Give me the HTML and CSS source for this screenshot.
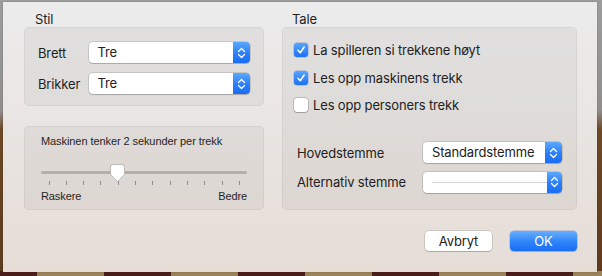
FILE: index.html
```html
<!DOCTYPE html>
<html lang="no">
<head>
  <meta charset="UTF-8">
  <title>Innstillinger</title>
  <link rel="stylesheet" href="styles.css">
</head>
<body>
  <div class="sheet">
    <div class="columns">
      <section class="col col-left">
        <h2 class="group-title">Stil</h2>
        <div class="box box-style">
          <div class="field">
            <span class="field-label">Brett</span>
            <div class="popup">
              <span class="popup-value">Tre</span>
              <span class="popup-arrows"><svg width="9" height="12" viewBox="0 0 9 12"><path d="M1.5 4.5 L4.5 1.5 L7.5 4.5 M1.5 7.5 L4.5 10.5 L7.5 7.5" fill="none" stroke="#fff" stroke-width="1.3" stroke-linecap="round" stroke-linejoin="round"/></svg></span>
            </div>
          </div>
          <div class="field">
            <span class="field-label">Brikker</span>
            <div class="popup">
              <span class="popup-value">Tre</span>
              <span class="popup-arrows"><svg width="9" height="12" viewBox="0 0 9 12"><path d="M1.5 4.5 L4.5 1.5 L7.5 4.5 M1.5 7.5 L4.5 10.5 L7.5 7.5" fill="none" stroke="#fff" stroke-width="1.3" stroke-linecap="round" stroke-linejoin="round"/></svg></span>
            </div>
          </div>
        </div>
        <div class="box box-speed">
          <div class="speed-title">Maskinen tenker 2 sekunder per trekk</div>
          <div class="slider">
            <div class="slider-track"></div>
            <svg class="slider-knob" width="17" height="20" viewBox="0 0 17 20"><path d="M1.5 4 a2.5 2.5 0 0 1 2.5 -2.5 h9 a2.5 2.5 0 0 1 2.5 2.5 v7.5 l-7 7 l-7 -7 z" fill="#fff" stroke="#b9b6b4" stroke-width="0.8"/></svg>
          </div>
          <div class="ticks">
            <i></i><i></i><i></i><i></i><i></i><i></i><i></i><i></i><i></i><i></i><i></i><i></i>
          </div>
          <div class="slider-labels">
            <span>Raskere</span>
            <span>Bedre</span>
          </div>
        </div>
      </section>
      <section class="col col-right">
        <h2 class="group-title">Tale</h2>
        <div class="box box-speech">
          <label class="check-row">
            <span class="checkbox checked"><svg width="10" height="10" viewBox="0 0 10 10"><path d="M2 5.3 L4.2 7.8 L8.2 2" fill="none" stroke="#fff" stroke-width="1.5" stroke-linecap="round" stroke-linejoin="round"/></svg></span>
            La spilleren si trekkene høyt
          </label>
          <label class="check-row">
            <span class="checkbox checked"><svg width="10" height="10" viewBox="0 0 10 10"><path d="M2 5.3 L4.2 7.8 L8.2 2" fill="none" stroke="#fff" stroke-width="1.5" stroke-linecap="round" stroke-linejoin="round"/></svg></span>
            Les opp maskinens trekk
          </label>
          <label class="check-row">
            <span class="checkbox"></span>
            Les opp personers trekk
          </label>
          <div class="voices">
            <div class="field">
              <span class="field-label voice-label">Hovedstemme</span>
              <div class="popup popup-voice">
                <span class="popup-value">Standardstemme</span>
                <span class="popup-arrows"><svg width="9" height="12" viewBox="0 0 9 12"><path d="M1.5 4.5 L4.5 1.5 L7.5 4.5 M1.5 7.5 L4.5 10.5 L7.5 7.5" fill="none" stroke="#fff" stroke-width="1.3" stroke-linecap="round" stroke-linejoin="round"/></svg></span>
              </div>
            </div>
            <div class="field">
              <span class="field-label voice-label">Alternativ stemme</span>
              <div class="popup popup-voice">
                <span class="popup-value"><span class="popup-separator"></span></span>
                <span class="popup-arrows"><svg width="9" height="12" viewBox="0 0 9 12"><path d="M1.5 4.5 L4.5 1.5 L7.5 4.5 M1.5 7.5 L4.5 10.5 L7.5 7.5" fill="none" stroke="#fff" stroke-width="1.3" stroke-linecap="round" stroke-linejoin="round"/></svg></span>
              </div>
            </div>
          </div>
        </div>
      </section>
    </div>
    <div class="actions">
      <button class="btn">Avbryt</button>
      <button class="btn btn-default">OK</button>
    </div>
  </div>
</body>
</html>
```

FILE: styles.css
```css
html, body { margin: 0; padding: 0; }
body {
  width: 602px; height: 276px; overflow: hidden;
  font-family: Inter, "Liberation Sans", sans-serif; color: #222; letter-spacing: -0.15px;
  background:
    repeating-linear-gradient(90deg, #4c1d1b 0 67px, #9a8358 67px 134px) 104px 100% / 134px 5px repeat-x,
    linear-gradient(180deg, #9c9c9c 0, #8e8e8e 110px, #6c4826 130px, #5e3b1e 100%);
}
.sheet {
  box-sizing: border-box; width: 594px; height: 270px; margin: 2px 0 0 3px;
  padding: 9px 20px 0 21px;
  background: linear-gradient(180deg, #ececec 0%, #e9e5e2 45%, #e6ddd7 100%);
  box-shadow: 0 0 1px rgba(0,0,0,0.35);
}
.columns { display: flex; gap: 18px; }
.col-left { width: 240px; display: flex; flex-direction: column; }
.col-right { width: 295px; }
.group-title { margin: 0; height: 16px; line-height: 16px; font-size: 13px; font-weight: normal; color: #1f1f1f; }
.col-left .group-title { padding-left: 11px; }
.col-right .group-title { padding-left: 10px; }
.box {
  box-sizing: border-box; border: 1px solid rgba(0,0,0,0.05); border-radius: 5px;
  background: rgba(0,0,0,0.045);
}
.box-style { height: 79px; padding: 14px 13px 0 13px; display: flex; flex-direction: column; gap: 10px; }
.field { display: flex; align-items: center; height: 21px; }
.field-label { width: 51px; font-size: 13px; }
.popup {
  box-sizing: border-box; width: 163px; height: 21px; display: flex;
  background: #fff; border-radius: 4px;
  box-shadow: 0 0 0 0.5px rgba(0,0,0,0.22), 0 1px 1px rgba(0,0,0,0.15);
}
.popup-value { flex: 1; padding-left: 9px; font-size: 13px; line-height: 21px; display: flex; align-items: center; }
.popup-arrows {
  width: 17px; display: flex; align-items: center; justify-content: center;
  background: linear-gradient(180deg, #5ba8fd 0%, #2b7ef8 55%, #196df5 100%);
  border-radius: 0 4px 4px 0;
}
.box-speed { height: 84px; margin-top: 20px; padding: 8px 16px 0 16px; }
.speed-title { font-family: "Liberation Sans", Arial, sans-serif; font-size: 11px; line-height: 13px; letter-spacing: -0.08px; color: #1f1f1f; }
.slider { position: relative; height: 20px; margin-top: 15px; }
.slider-track { position: absolute; left: 0; right: 0; top: 8px; height: 3px; border-radius: 2px; background: #b3afac; }
.slider-knob { position: absolute; left: 68px; top: 0; filter: drop-shadow(0 0.5px 0.6px rgba(0,0,0,0.3)); }
.ticks { display: flex; justify-content: space-between; padding: 0 7px 0 7.5px; margin-top: -2px; height: 4px; }
.ticks i { width: 1px; height: 4px; background: #8f8c8a; }
.slider-labels { display: flex; justify-content: space-between; font-family: "Liberation Sans", Arial, sans-serif; font-size: 11px; line-height: 13px; margin-top: 5px; letter-spacing: -0.1px; color: #1f1f1f; }
.box-speech { height: 183px; padding: 15px 14px 0 11px; }
.check-row { display: flex; align-items: center; gap: 5px; height: 14px; font-size: 13px; margin-bottom: 13.5px; }
.checkbox {
  box-sizing: border-box; width: 14px; height: 14px; border-radius: 3px; background: #fff;
  box-shadow: 0 0 0 0.5px rgba(0,0,0,0.3), 0 0.5px 1px rgba(0,0,0,0.15);
  display: flex; align-items: center; justify-content: center;
}
.checkbox.checked { background: linear-gradient(180deg, #57a5fd 0%, #1c70f5 100%); box-shadow: 0 0 0 0.5px rgba(0,60,200,0.35); }
.voices { margin-top: 30px; padding-left: 3px; display: flex; flex-direction: column; gap: 8.5px; }
.voice-label { width: 126px; }
.popup-voice { width: 139px; }
.popup-separator { display: block; width: 115px; height: 1px; background: #d6d6d6; }
.actions { display: flex; justify-content: flex-end; gap: 18px; margin-top: 21px; }
.btn {
  box-sizing: border-box; width: 67px; height: 20px; padding: 0; border: none; border-radius: 4px;
  font-family: Inter, "Liberation Sans", sans-serif; font-size: 13px; letter-spacing: -0.15px; color: #222; background: #fff;
  box-shadow: 0 0 0 0.5px rgba(0,0,0,0.22), 0 1px 1px rgba(0,0,0,0.15);
}
.btn-default { color: #fff; background: linear-gradient(180deg, #66affd 0%, #2f83f8 55%, #186df5 100%); box-shadow: 0 0 0 0.5px rgba(0,60,200,0.3), 0 1px 1px rgba(0,0,0,0.15); }
```
